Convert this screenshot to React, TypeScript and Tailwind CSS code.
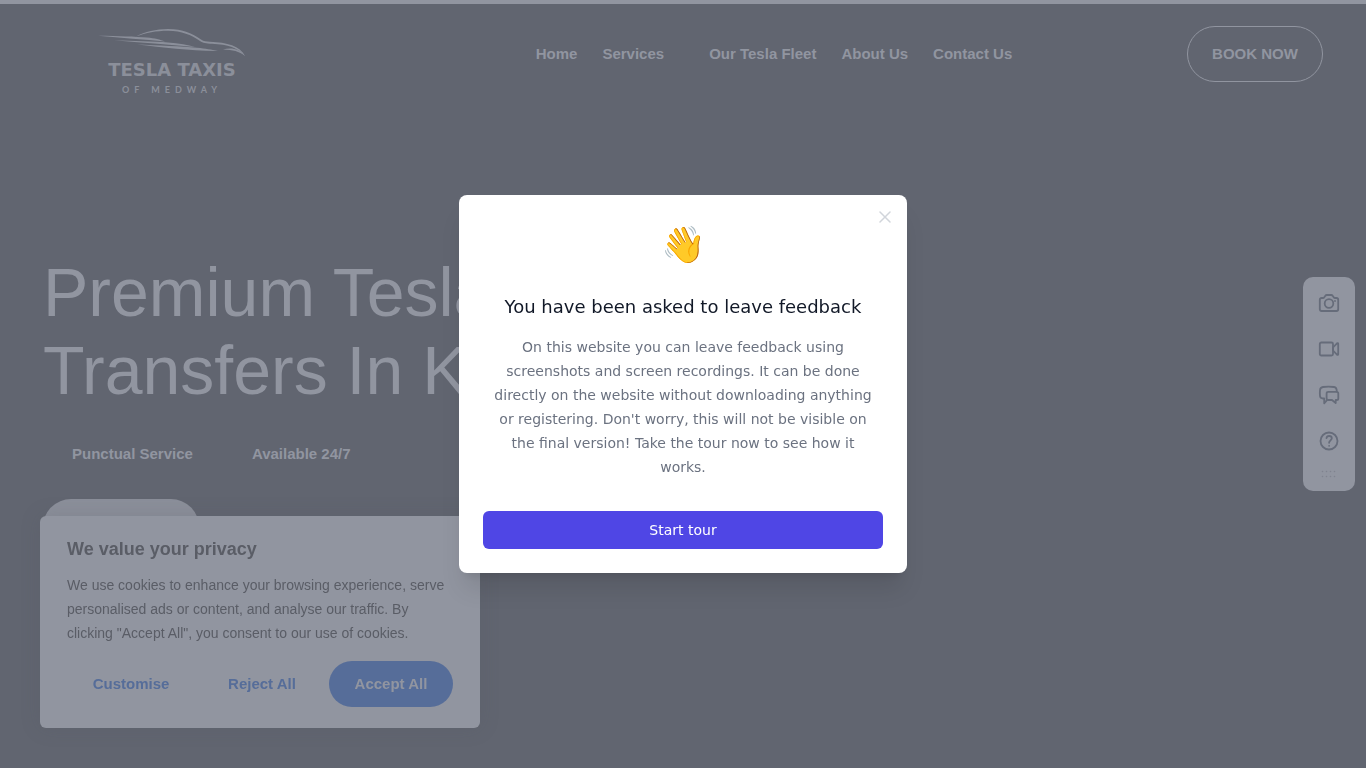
import type { ReactNode } from "react";
import clsx from "clsx";

const navLinks = [
  { label: "Home", href: "#home" },
  { label: "Services", href: "#services", hasMenu: true },
  { label: "Our Tesla Fleet", href: "#fleet" },
  { label: "About Us", href: "#about" },
  { label: "Contact Us", href: "#contact" },
];

const features = ["Punctual Service", "Available 24/7"];

const Logo = () => (
  <a
    href="#home"
    className="flex w-[148px] flex-col items-center text-[#8b8f9a]"
  >
    <svg
      viewBox="0 0 148 32"
      className="h-8 w-full"
      fill="currentColor"
      aria-hidden="true"
    >
      <path d="M38 10.500C47 5.800 58 3 70 3c15 0 24 4.500 33 10.500 3 2 5 2 9 2.300 17 .7 30 4.200 35 14.200-7-8-17-11.500-33-12.200-6-.2-9-.9-12-2.800C93 9 84 4.900 70 4.800 58 4.800 48 6.900 38 10.500Z" />
      <path d="M0 9.700c21 .3 37 .8 49 1.800 8 .7 13 2 18 4C46 13.500 24 12 0 9.700Z" />
      <path d="M16 14.200c18 1 41 1.200 54 2.200 11 .8 20 2.300 27 4.600-27-2.800-54-4.300-81-6.800Z" />
      <path d="M39 18.600c21 1 45 1.700 60 3.200 9 .9 14 1.900 21 3.200-28 .2-54-3.600-81-6.400Z" />
      <path d="M125 23.500c7-2 17-1.500 22 6.500-6-5-12-6-22-6.500Z" />
    </svg>
    <span className="whitespace-nowrap font-['DejaVu_Sans',sans-serif] text-lg font-bold leading-6">
      TESLA TAXIS
    </span>
    <span className="mt-0.5 whitespace-nowrap font-[Lato,sans-serif] text-[9px] font-bold leading-3 tracking-[5px]">
      OF MEDWAY
    </span>
  </a>
);

const Header = () => (
  <header className="flex items-start justify-between pl-[43px] pr-[43px] pt-[22px]">
    <div className="w-[318px] pl-[55px]">
      <Logo />
    </div>
    <nav className="flex h-14 items-center gap-[25px] whitespace-nowrap text-[15px] font-bold">
      {navLinks.map((link) => (
        <a
          key={link.label}
          href={link.href}
          className={clsx(link.hasMenu && "pr-5")}
        >
          {link.label}
        </a>
      ))}
    </nav>
    <a
      href="#book"
      className="flex h-14 w-[136px] items-center justify-center rounded-full border border-[#9195a0] text-[15px] font-bold"
    >
      BOOK NOW
    </a>
  </header>
);

const Hero = () => (
  <main className="px-[43px] pt-[157px]">
    <h1 className="text-[68px] leading-[78px]">
      Premium Tesla
      <br />
      Transfers In Kent
    </h1>
    <ul className="mt-[33px] flex gap-[59px] pl-[29px] text-[15px] font-bold leading-6">
      {features.map((feature) => (
        <li key={feature}>{feature}</li>
      ))}
    </ul>
    <a
      href="#book"
      className="mt-[33px] flex h-14 w-[156px] items-center justify-center rounded-full bg-[#8b8f9a] text-[15px] font-bold text-[#5a5d66]"
    >
      Book Now
    </a>
  </main>
);

const CookieNotice = () => (
  <section
    aria-labelledby="cookie-title"
    className="fixed bottom-10 left-10 w-[440px] rounded-md bg-[#9195a0] px-[27px] pb-[21px] pt-[21px] text-[#5a5d66] shadow-[0_0_20px_rgba(80,84,94,0.2)]"
  >
    <h2 id="cookie-title" className="text-lg font-bold leading-6">
      We value your privacy
    </h2>
    <p className="mt-3 text-sm leading-6">
      We use cookies to enhance your browsing experience, serve personalised ads
      or content, and analyse our traffic. By clicking "Accept All", you consent
      to our use of cookies.
    </p>
    <div className="mt-4 flex justify-between whitespace-nowrap text-[15px] font-bold text-[#566d99]">
      <button type="button" className="h-[46px] w-32 rounded-full">
        Customise
      </button>
      <button type="button" className="h-[46px] w-[118px] rounded-full">
        Reject All
      </button>
      <button
        type="button"
        className="h-[46px] w-[124px] rounded-full bg-[#566d99] text-[#9195a0]"
      >
        Accept All
      </button>
    </div>
  </section>
);

interface ToolButtonProps {
  label: string;
  children: ReactNode;
}

const ToolButton = ({ label, children }: ToolButtonProps) => (
  <button
    type="button"
    aria-label={label}
    className="flex h-[46px] w-full items-center justify-center"
  >
    <svg
      viewBox="0 0 24 24"
      className="size-6"
      fill="none"
      stroke="currentColor"
      strokeWidth="1.8"
      strokeLinecap="round"
      strokeLinejoin="round"
    >
      {children}
    </svg>
  </button>
);

const FeedbackToolbar = () => (
  <aside
    aria-label="Feedback tools"
    className="fixed right-[11px] top-1/2 flex w-[52px] -translate-y-1/2 flex-col items-center rounded-[10px] bg-[#9195a0] pb-[13px] pt-[3px] text-[#666c7a]"
  >
    <ToolButton label="Take screenshot">
      <path d="M4.500 7h1.300c.7 0 1.200-.3 1.500-.8l.9-1.300c.4-.6.900-.9 1.600-.9h4.400c.7 0 1.200.3 1.600.9l.9 1.300c.3.500.8.800 1.500.8h1.300A1.700 1.700 0 0 1 21.200 8.700v9.600a1.700 1.700 0 0 1-1.700 1.700h-15a1.700 1.700 0 0 1-1.700-1.700V8.700A1.700 1.700 0 0 1 4.500 7Z" />
      <circle cx="12" cy="12.500" r="4.300" />
      <path d="M18 10h.01" />
    </ToolButton>
    <ToolButton label="Record screen">
      <rect x="2.800" y="5.500" width="13.200" height="13" rx="1.500" />
      <path d="m16 10.500 4-4.200c.5-.4 1.200-.2 1.200.5v10.400c0 .7-.7.900-1.200.5l-4-4.200Z" />
    </ToolButton>
    <ToolButton label="View feedback">
      <path d="M19.800 8.500c0-3-.8-4.200-2.800-4.500-3.500-.5-7.500-.5-11 0-2 .3-2.800 1.200-3 3-.2 2-.2 4 0 6 .2 1.700 1.200 2.500 3 2.500h1.200v4.800l3.200-3.600" />
      <path d="M11.200 8.800h8.500c1 0 1.600.6 1.600 1.600v5c0 1-.6 1.600-1.600 1.600h-1v3l-3.700-3h-3.800c-1 0-1.600-.6-1.600-1.600v-5c0-1 .6-1.600 1.600-1.600Z" />
    </ToolButton>
    <ToolButton label="Help">
      <circle cx="12" cy="12" r="8.500" />
      <path d="M9.500 9.200C9.700 7.700 10.800 7 12.100 7c1.500 0 2.700.9 2.700 2.300 0 2-2.700 2.100-2.700 4.500M12.100 16.800h.01" />
    </ToolButton>
    <svg
      viewBox="0 0 16 8"
      className="mt-1.5 h-2 w-4"
      fill="#7f838f"
      aria-hidden="true"
    >
      {[1.5, 5.5, 9.5, 13.5].map((x) => (
        <g key={x}>
          <circle cx={x} cy="1.500" r="0.800" />
          <circle cx={x} cy="6.500" r="0.800" />
        </g>
      ))}
    </svg>
  </aside>
);

const FeedbackDialog = () => (
  <div className="fixed inset-0 flex items-center justify-center">
    <div
      role="dialog"
      aria-modal="true"
      aria-labelledby="tour-title"
      className="relative w-full max-w-md rounded-lg bg-white px-6 pb-6 pt-6 text-center font-['DejaVu_Sans',sans-serif] shadow-xl"
    >
      <button
        type="button"
        aria-label="Close"
        className="absolute right-3 top-3 flex size-5 items-center justify-center text-[#d1d5db]"
      >
        <svg
          viewBox="0 0 12 12"
          className="size-3"
          fill="none"
          stroke="currentColor"
          strokeWidth="1.500"
          strokeLinecap="round"
        >
          <path d="m1 1 10 10M11 1 1 11" />
        </svg>
      </button>
      <div className="pl-0.5 font-['Noto_Color_Emoji',sans-serif] text-[36px] leading-[52px]">
        👋
      </div>
      <h2
        id="tour-title"
        className="mt-6 text-lg font-normal leading-6 text-[#111827]"
      >
        You have been asked to leave feedback
      </h2>
      <p className="mt-4 px-2 text-sm leading-6 text-[#6b7280]">
        On this website you can leave feedback using screenshots and screen
        recordings. It can be done directly on the website without downloading
        anything or registering. Don't worry, this will not be visible on the
        final version! Take the tour now to see how it works.
      </p>
      <button
        type="button"
        className="mt-8 h-[38px] w-full rounded-md bg-[#4f46e5] text-sm text-white"
      >
        Start tour
      </button>
    </div>
  </div>
);

const App = () => (
  <div className="min-h-screen border-t-4 border-[#9195a0] bg-[#616570] font-['Liberation_Sans',sans-serif] text-[#9195a0]">
    <Header />
    <Hero />
    <CookieNotice />
    <FeedbackToolbar />
    <FeedbackDialog />
  </div>
);

export default App;
